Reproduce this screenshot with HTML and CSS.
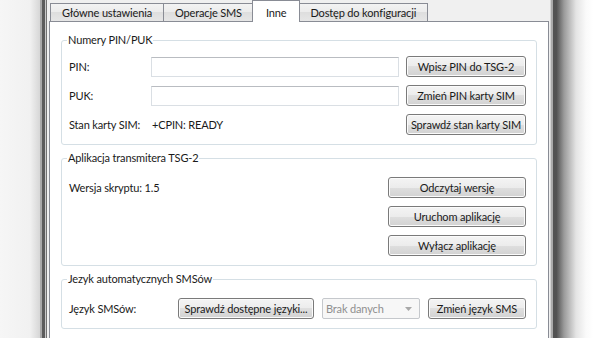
FILE: index.html
```html
<!DOCTYPE html>
<html lang="pl">
<head>
    <meta charset="UTF-8">
    <meta name="viewport" content="width=device-width, initial-scale=1.0">
    <title>Konfiguracja TSG-2</title>
    <link rel="stylesheet" href="styles.css">
</head>
<body>
    <div class="desk"></div>
    <div class="edge edge-left"></div>
    <div class="dialog">
        <div class="tabs">
            <div class="tab">Główne ustawienia</div>
            <div class="tab">Operacje SMS</div>
            <div class="tab active">Inne</div>
            <div class="tab">Dostęp do konfiguracji</div>
        </div>
        <div class="pane">
            <fieldset class="group group-pin">
                <legend>Numery PIN/PUK</legend>
                <span class="label">PIN:</span>
                <input type="text" class="field">
                <button class="btn">Wpisz PIN do TSG-2</button>
                <span class="label">PUK:</span>
                <input type="text" class="field">
                <button class="btn">Zmień PIN karty SIM</button>
                <span class="label">Stan karty SIM:</span>
                <span class="value">+CPIN: READY</span>
                <button class="btn">Sprawdź stan karty SIM</button>
            </fieldset>

            <fieldset class="group group-app">
                <legend>Aplikacja transmitera TSG-2</legend>
                <span class="label">Wersja skryptu: 1.5</span>
                <button class="btn">Odczytaj wersję</button>
                <span></span>
                <button class="btn">Uruchom aplikację</button>
                <span></span>
                <button class="btn">Wyłącz aplikację</button>
            </fieldset>

            <fieldset class="group group-lang">
                <legend>Jezyk automatycznych SMSów</legend>
                <span class="label">Język SMSów:</span>
                <button class="btn btn-wide">Sprawdź dostępne języki...</button>
                <div class="combo disabled">
                    <span>Brak danych</span>
                    <svg width="7" height="4" viewBox="0 0 7 4"><path d="M0 0h7L3.5 4z" fill="#a8a8a8"/></svg>
                </div>
                <button class="btn btn-narrow">Zmień język SMS</button>
            </fieldset>
        </div>
    </div>
    <div class="edge edge-right"></div>
    <div class="shadow"></div>
</body>
</html>
```

FILE: styles.css
```css
html, body {
    height: 100%;
}
body {
    margin: 0;
    display: flex;
    overflow: hidden;
    background-color: #f4f4f4;
    font-family: Lato, "Segoe UI", sans-serif;
    font-size: 11px;
    letter-spacing: -0.15px;
    line-height: 14px;
    color: #1a1a1a;
}
.desk {
    width: 40px;
    flex: none;
    background: linear-gradient(to right, #f6f6f6 0, #f1f1f1 75%, #d6d6d6 100%);
}
.edge {
    flex: none;
}
.edge-left {
    width: 7px;
    background: linear-gradient(to right, #a9a9a9 0 2px, #5c5c5c 2px 5px, #c9c9c9 5px 6px, #727272 6px 7px);
}
.edge-right {
    width: 6px;
    background: linear-gradient(to right, #d4d4d4 0 1px, #a9a9a9 1px 3px, #525252 3px 6px);
}
.shadow {
    flex: 1;
    background: linear-gradient(to right, #4e4e4e 0, #9a9a9a 8px, #e4e4e4 20px, #fafafa 30px, #fff 100%);
}
.dialog {
    width: 500px;
    height: 100%;
    flex: none;
    padding: 0 1px 0 2px;
    overflow: hidden;
    background-color: #f0f0f0;
}

/* tabs */
.tabs {
    display: flex;
    align-items: flex-end;
    height: 21px;
    padding-left: 1px;
}
.tab {
    position: relative;
    height: 17px;
    padding: 0 11px;
    line-height: 18px;
    border: 1px solid #898c95;
    border-bottom: none;
    background: linear-gradient(#f3f3f3, #ebebeb 50%, #dedede 50%, #e6e6e6);
    white-space: nowrap;
}
.tab + .tab {
    margin-left: -1px;
}
.tab.active {
    z-index: 1;
    height: 21px;
    margin: 0 -2px -1px;
    padding: 0 13px;
    line-height: 23px;
    background: #fff;
}
.tab.active + .tab {
    margin-left: 0;
}

.pane {
    height: 400px;
    padding: 11px 11px 0;
    border: 1px solid #898c95;
    background-color: #fff;
}

/* group boxes */
.group {
    margin: 0 0 6px;
    padding: 9px 10px 9px 7px;
    border: 1px solid #d5dfe5;
    border-radius: 3px;
    min-width: 0;
}
.group legend {
    padding: 0 1px;
    margin-left: -2px;
    line-height: 14px;
}
.label {
    white-space: nowrap;
}
.group-pin {
    display: grid;
    grid-template-columns: 75px 1fr 120px;
    grid-auto-rows: 21px;
    gap: 8px 7px;
    align-items: center;
}
.group-app {
    display: grid;
    grid-template-columns: 1fr 138px;
    grid-auto-rows: 21px;
    row-gap: 8px;
    align-items: center;
    padding-top: 12px;
}
.group-lang {
    display: flex;
    align-items: center;
    gap: 8px;
    padding-top: 12px;
}
.group-lang .label {
    flex: 1;
}

.field {
    height: 20px;
    box-sizing: border-box;
    margin: 0;
    border: 1px solid #dadfe4;
    border-top-color: #b9bcc1;
    background: #fff;
    font: inherit;
}
.value {
    padding-left: 1px;
}

.btn {
    height: 21px;
    margin: 0;
    padding: 0;
    border: 1px solid #7a7a7a;
    border-radius: 3px;
    background: linear-gradient(#f4f4f4, #ececec 50%, #dfdfdf 50%, #d2d2d2);
    box-shadow: inset 0 0 0 1px #fbfbfb;
    font: inherit;
    letter-spacing: inherit;
    color: inherit;
    white-space: nowrap;
}
.btn-wide {
    width: 136px;
}
.btn-narrow {
    width: 98px;
}

.combo {
    display: flex;
    align-items: center;
    justify-content: space-between;
    width: 98px;
    height: 21px;
    box-sizing: border-box;
    padding: 0 7px 0 3px;
    border: 1px solid #c5c8cc;
    border-radius: 2px;
    background: #f7f7f7;
}
.combo.disabled {
    color: #8f8f8f;
}
```
